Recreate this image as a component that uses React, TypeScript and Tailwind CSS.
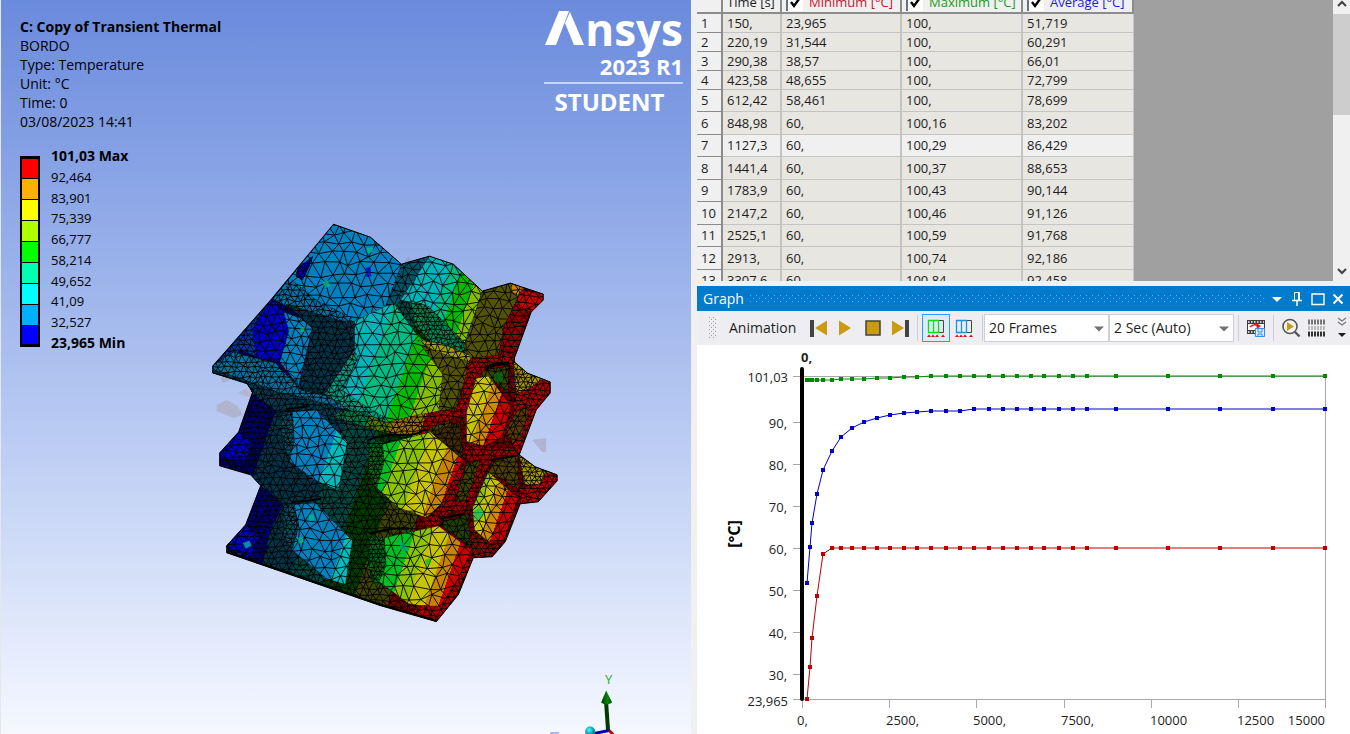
import React, { useState } from 'react';

type Point = [number, number];

interface Face {
  id: string;
  points: string;
  fill: string;
  mesh?: number;
}

interface Band {
  color: string;
  until: number;
}

interface ResultRow {
  time: string;
  min: string;
  max: string;
  avg: string;
}

const LEGEND_COLORS = [
  'bg-[#ff0000]',
  'bg-[#ffb000]',
  'bg-[#ffff00]',
  'bg-[#b0ff00]',
  'bg-[#00ff00]',
  'bg-[#00ffb0]',
  'bg-[#00ffff]',
  'bg-[#00b0ff]',
  'bg-[#0000ff]',
];

const LEGEND_LABELS = [
  '101,03 Max',
  '92,464',
  '83,901',
  '75,339',
  '66,777',
  '58,214',
  '49,652',
  '41,09',
  '32,527',
  '23,965 Min',
];

const ROWS: ResultRow[] = [
  { time: '150,', min: '23,965', max: '100,', avg: '51,719' },
  { time: '220,19', min: '31,544', max: '100,', avg: '60,291' },
  { time: '290,38', min: '38,57', max: '100,', avg: '66,01' },
  { time: '423,58', min: '48,655', max: '100,', avg: '72,799' },
  { time: '612,42', min: '58,461', max: '100,', avg: '78,699' },
  { time: '848,98', min: '60,', max: '100,16', avg: '83,202' },
  { time: '1127,3', min: '60,', max: '100,29', avg: '86,429' },
  { time: '1441,4', min: '60,', max: '100,37', avg: '88,653' },
  { time: '1783,9', min: '60,', max: '100,43', avg: '90,144' },
  { time: '2147,2', min: '60,', max: '100,46', avg: '91,126' },
  { time: '2525,1', min: '60,', max: '100,59', avg: '91,768' },
  { time: '2913,', min: '60,', max: '100,74', avg: '92,186' },
  { time: '3307,6', min: '60,', max: '100,84', avg: '92,458' },
];

// Later time steps, below the visible part of the table
const LATE_TIMES = [
  3700, 4130, 4530, 4930, 5350, 5764, 6166, 6567, 6940, 7370, 7772, 8173, 9005, 10500, 12000, 13500, 15000,
];

const OUTLINE =
  '333,224 370,237 401,264 429,256 453,264 482,291 510,283 543,294 543,300 531,312 513,361 527,373 550,382 550,393 536,410 519,455 535,467 557,475 557,481 538,502 520,504 505,542 492,557 473,558 458,595 436,622 380,606 226,553 226,546 245,525 260,486 250,475 219,466 219,453 238,432 252,392 246,383 212,373 212,366 270,300';

// Temperature bands; "until" is measured along the slanted gradient axis
const BANDS: Record<string, Band[]> = {
  dark: [
    { color: '#00005c', until: 272 },
    { color: '#003448', until: 345 },
    { color: '#004842', until: 382 },
    { color: '#003c00', until: 416 },
    { color: '#404400', until: 452 },
    { color: '#6e0000', until: 700 },
  ],
  top: [
    { color: '#00b4bc', until: 352 },
    { color: '#00bc84', until: 386 },
    { color: '#00bc00', until: 408 },
    { color: '#86bc00', until: 700 },
  ],
  bump: [
    { color: '#00b4bc', until: 396 },
    { color: '#00bc84', until: 409 },
    { color: '#00bc00', until: 426 },
    { color: '#86bc00', until: 700 },
  ],
  left: [
    { color: '#0082c0', until: 340 },
    { color: '#00bcbc', until: 700 },
  ],
  lowerLeft: [
    { color: '#0082c0', until: 386 },
    { color: '#00bcbc', until: 700 },
  ],
  center: [
    { color: '#00c020', until: 408 },
    { color: '#8cc400', until: 434 },
    { color: '#c8c400', until: 456 },
    { color: '#c88400', until: 470 },
    { color: '#cc0000', until: 700 },
  ],
  lowerCenter: [
    { color: '#00c020', until: 454 },
    { color: '#8cc400', until: 470 },
    { color: '#c8c400', until: 489 },
    { color: '#c88400', until: 503 },
    { color: '#cc0000', until: 700 },
  ],
  right: [
    { color: '#c8c400', until: 479 },
    { color: '#d08a00', until: 492 },
    { color: '#cc0000', until: 700 },
  ],
  lowerRight: [
    { color: '#8cc400', until: 510 },
    { color: '#c8c400', until: 521 },
    { color: '#d08a00', until: 532 },
    { color: '#cc0000', until: 700 },
  ],
  ledge: [
    { color: '#00784c', until: 368 },
    { color: '#507c00', until: 392 },
    { color: '#a07000', until: 424 },
    { color: '#a80000', until: 700 },
  ],
};

const FACES: Face[] = [
  { id: 'body', points: OUTLINE, fill: 'url(#band-dark)', mesh: 7 },
  { id: 'leg-upper', points: '252,392 272,406 266,432 256,452 246,462 238,432', fill: '#000070', mesh: 6 },
  { id: 'leg-lower', points: '260,486 283,504 270,530 262,564 240,557 245,525', fill: '#000078', mesh: 6 },
  { id: 'roof', points: '333,224 370,237 401,264 394,306 355,322 322,312 285,304 272,299', fill: '#0082c0', mesh: 12 },
  { id: 'roof-edge', points: '272,299 292,280 316,300 352,318 345,326 285,306', fill: '#0074a8', mesh: 6 },
  { id: 'roof-cold', points: '297,268 313,255 309,266 302,280 295,276', fill: '#0000b0', mesh: 5 },
  { id: 'cold', points: '271,299 283,312 300,317 288,331 279,361 262,360 243,352 241,334', fill: '#0000c0', mesh: 10 },
  { id: 'cold-edge', points: '213,366 271,299 252,329 256,357 240,350 225,362', fill: '#0038a0', mesh: 6 },
  { id: 'notch', points: '283,312 300,318 312,328 298,386 279,362 288,331', fill: '#0082c0', mesh: 10 },
  { id: 'notch-shade', points: '285,304 345,322 354,350 324,393 298,389 312,328', fill: '#003448', mesh: 7 },
  { id: 'ridge', points: '212,366 232,352 275,363 300,390 326,396 350,410 320,406 270,392 212,373', fill: '#0074a0', mesh: 6 },
  { id: 'ridge-shade', points: '212,369 248,381 275,391 320,402 352,412 340,424 300,410 276,412 252,394 246,383 212,373', fill: '#003c50', mesh: 6 },
  { id: 'valley', points: '401,264 429,256 415,285 394,307 385,306', fill: '#005468', mesh: 8 },
  { id: 'plate', points: '354,321 385,306 394,304 416,334 432,346 452,372 440,412 386,424 350,410 324,394 354,350', fill: 'url(#band-top)', mesh: 12 },
  { id: 'plate-edge', points: '354,350 358,358 342,390 362,404 386,418 382,427 350,411 324,394', fill: '#009c84', mesh: 6 },
  { id: 'bump', points: '429,256 453,264 482,291 466,344 440,340 420,322 410,302 400,300', fill: 'url(#band-bump)', mesh: 11 },
  { id: 'bump-edge', points: '410,300 428,306 466,344 462,354 430,342 414,325', fill: '#008c58', mesh: 5 },
  { id: 'fin', points: '482,291 510,283 521,290 505,328 498,356 470,358 463,346', fill: '#545400', mesh: 10 },
  { id: 'fin-tip', points: '510,283 525,288 517,295 512,292', fill: '#c88400', mesh: 8 },
  { id: 'fin-hot', points: '521,290 543,294 543,300 531,312 522,318 514,306', fill: '#cc0000', mesh: 8 },
  { id: 'fin-shade', points: '514,304 531,312 513,362 498,357 503,328', fill: '#900000', mesh: 7 },
  { id: 'olive', points: '420,345 466,356 468,372 455,408 438,412 442,374', fill: '#545400', mesh: 9 },
  { id: 'olive-edge', points: '416,340 440,343 474,357 470,362 436,352', fill: '#a8a000', mesh: 7 },
  { id: 'ledge', points: '350,408 386,422 420,414 458,408 468,396 466,414 430,428 422,438 380,432 330,416', fill: 'url(#band-ledge)', mesh: 6 },
  { id: 'frame-top', points: '470,358 513,353 516,366 484,372 466,412 456,410', fill: '#a80000', mesh: 6 },
  { id: 'hollow', points: '484,370 508,366 508,392 496,384 480,376', fill: '#384400', mesh: 7 },
  { id: 'tip-mid', points: '513,361 527,373 548,381 528,394 516,396', fill: '#a89400', mesh: 5 },
  { id: 'tip-mid-hot', points: '530,388 540,380 550,382 550,393 536,410 519,455 512,442 514,394', fill: '#b00000', mesh: 6 },
  { id: 'tip-mid-dark', points: '516,412 530,404 522,436 512,444 506,430', fill: '#583c00', mesh: 7 },
  { id: 'hex-left', points: '288,412 316,410 347,442 338,491 314,480 288,461', fill: 'url(#band-left)', mesh: 11 },
  { id: 'hex-left-edge', points: '280,414 292,412 294,440 289,462 281,440', fill: '#005468', mesh: 5 },
  { id: 'hex-center', points: '376,446 430,432 463,460 441,504 426,518 398,508 372,484', fill: 'url(#band-center)', mesh: 12 },
  { id: 'hex-center-edge', points: '368,444 382,440 384,462 376,490 368,474', fill: '#006c18', mesh: 5 },
  { id: 'hex-center-shade', points: '430,432 460,422 463,460', fill: '#402c00', mesh: 7 },
  { id: 'rim-center', points: '463,460 470,508 448,514 432,532 420,526 440,506', fill: '#a00000', mesh: 6 },
  { id: 'hex-lower-left', points: '290,505 315,503 352,541 345,585 326,579 291,550', fill: 'url(#band-lowerLeft)', mesh: 11 },
  { id: 'hex-lower-left-edge', points: '282,506 294,504 298,528 292,550 283,540', fill: '#005468', mesh: 5 },
  { id: 'hex-lower-center', points: '374,540 438,526 471,550 456,592 436,609 408,604 376,580', fill: 'url(#band-lowerCenter)', mesh: 12 },
  { id: 'hex-lower-center-edge', points: '368,538 384,537 386,566 376,588 369,572', fill: '#006c18', mesh: 5 },
  { id: 'rim-lower', points: '420,606 440,606 458,578 471,550 473,558 458,595 436,622 408,612', fill: '#a80000', mesh: 7 },
  { id: 'hollow-lower', points: '438,524 468,514 470,546', fill: '#204000', mesh: 7 },
  { id: 'hex-right', points: '466,412 476,378 488,376 511,406 502,438 484,446 466,442', fill: 'url(#band-right)', mesh: 11 },
  { id: 'frame-mid', points: '463,446 512,448 519,455 492,461 470,506 462,496 466,462', fill: '#a00000', mesh: 6 },
  { id: 'passage', points: '466,464 480,461 466,500 455,502', fill: '#3c4400', mesh: 7 },
  { id: 'passage-right', points: '492,461 518,456 518,490 504,480 488,474', fill: '#504000', mesh: 7 },
  { id: 'hex-lower-right', points: '472,508 488,472 518,498 504,540 490,544 474,530', fill: 'url(#band-lowerRight)', mesh: 10 },
  { id: 'rim-right', points: '470,534 492,546 505,538 492,557 473,558', fill: '#980000', mesh: 6 },
  { id: 'tip-low', points: '519,455 535,467 552,473 538,488 524,484', fill: '#a89c00', mesh: 5 },
  { id: 'tip-low-hot', points: '540,484 546,473 557,475 557,481 538,502 520,504 519,488', fill: '#b40000', mesh: 6 },
  { id: 'foot-upper', points: '219,453 238,432 250,442 246,460 222,460', fill: '#0000c0', mesh: 8 },
  { id: 'foot-lower', points: '226,546 245,525 258,536 250,556 228,551', fill: '#0000c0', mesh: 8 },
];

// Small off-colour elements scattered over the body
const SPOTS = [
  { points: '365,268 370,266 371,276 366,277', fill: '#0000c0' },
  { points: '322,282 327,280 330,286 325,288', fill: '#00bc84' },
  { points: '366,248 373,247 372,252 367,253', fill: '#00bc84' },
  { points: '242,543 249,541 251,546 245,549', fill: '#00b4bc' },
  { points: '308,515 313,515 314,520 309,521', fill: '#00bc84' },
  { points: '297,538 302,537 303,542 298,544', fill: '#00bc84' },
  { points: '398,540 404,544 408,552 401,550', fill: '#00a890' },
  { points: '473,512 480,508 484,514 476,522', fill: '#00c060' },
  { points: '425,560 431,558 430,564 425,566', fill: '#00c020' },
  { points: '493,374 502,372 503,382 495,381', fill: '#006c18' },
  { points: '300,328 304,326 304,332 300,332', fill: '#00bc60' },
];

const FRAGMENTS = [
  { points: '216,405 226,400 237,406 242,415 233,418 216,411', fill: '#b1b4cf' },
  { points: '237,393 246,388 252,397 244,396', fill: '#b3b6d0' },
  { points: '220,377 232,379 222,383', fill: '#a9afcf' },
  { points: '532,440 546,438 546,452 542,452', fill: '#b0b4d0' },
  { points: '404,262 408,256 412,262', fill: '#95a2d4' },
  { points: '534,308 543,302 538,311', fill: '#aab1d6' },
  { points: '249,506 254,497 252,510', fill: '#c9cce0' },
];

const parsePoints = (points: string): Point[] =>
  points.split(' ').map((pair) => pair.split(',').map(Number) as Point);

const noise = (a: number, b: number) => {
  const value = Math.sin(a * 127.1 + b * 311.7) * 43758.5453;
  return value - Math.floor(value) - 0.5;
};

// Irregular triangle grid that covers the bounding box of a face
const meshPath = (points: string, size: number) => {
  const vertices = parsePoints(points);
  const xs = vertices.map((v) => v[0]);
  const ys = vertices.map((v) => v[1]);
  const left = Math.min(...xs) - size;
  const top = Math.min(...ys) - size;
  const cols = Math.ceil((Math.max(...xs) - left) / size) + 2;
  const rows = Math.ceil((Math.max(...ys) - top) / (size * 0.87)) + 2;
  const at = (c: number, r: number) => {
    const x = left + (c + (r % 2) / 2) * size + noise(c + left, r) * size * 0.5;
    const y = top + r * size * 0.87 + noise(r + top, c) * size * 0.5;
    return `${x.toFixed(1)} ${y.toFixed(1)}`;
  };
  let d = '';
  for (let r = 0; r < rows; r++) {
    for (let c = 0; c < cols; c++) {
      const odd = r % 2;
      d += `M${at(c, r)}L${at(c + 1, r)}`;
      d += `M${at(c, r)}L${at(c + odd, r + 1)}`;
      d += `M${at(c, r)}L${at(c + odd - 1, r + 1)}`;
    }
  }
  return d;
};

const BandGradient: React.FC<{ name: string; bands: Band[] }> = ({ name, bands }) => {
  const offset = (u: number) => Math.min(1, (u - 200) / 449);
  return (
    <linearGradient id={`band-${name}`} gradientUnits="userSpaceOnUse" x1="200" y1="420" x2="600" y2="560">
      {bands.map((band, i) => (
        <React.Fragment key={band.color}>
          <stop offset={i === 0 ? 0 : offset(bands[i - 1].until)} stopColor={band.color} />
          <stop offset={offset(band.until)} stopColor={band.color} />
        </React.Fragment>
      ))}
    </linearGradient>
  );
};

const ThermalModel: React.FC = () => (
  <svg viewBox="0 0 691 734" className="absolute inset-0 h-full w-full" aria-label="Temperature result">
    <defs>
      {Object.entries(BANDS).map(([name, bands]) => (
        <BandGradient key={name} name={name} bands={bands} />
      ))}
      {FACES.map((face) => (
        <clipPath key={face.id} id={`clip-${face.id}`}>
          <polygon points={face.points} />
        </clipPath>
      ))}
      <linearGradient id="axis-green">
        <stop offset="0" stopColor="#003c00" />
        <stop offset="0.6" stopColor="#008a00" />
        <stop offset="1" stopColor="#004600" />
      </linearGradient>
      <radialGradient id="axis-ball" cx="0.4" cy="0.35">
        <stop offset="0" stopColor="#4ff" />
        <stop offset="1" stopColor="#008c98" />
      </radialGradient>
    </defs>

    {FRAGMENTS.map((piece) => (
      <polygon key={piece.points} points={piece.points} fill={piece.fill} />
    ))}

    {FACES.map((face) => (
      <g key={face.id} clipPath={`url(#clip-${face.id})`}>
        <polygon points={face.points} fill={face.fill} />
        <path d={meshPath(face.points, face.mesh ?? 10)} stroke="#000" strokeOpacity="0.9" fill="none" />
        <polygon points={face.points} fill="none" stroke="#000" strokeOpacity="0.5" />
      </g>
    ))}
    {SPOTS.map((spot) => (
      <polygon key={spot.points} points={spot.points} fill={spot.fill} fillOpacity="0.75" />
    ))}

    {/* Deep creases between the cells */}
    <g fill="none" stroke="#000" strokeLinecap="round" strokeWidth="2">
      <path d="M286 409 Q298 408 308 406" />
      <path d="M292 502 Q306 502 320 499" />
      <path d="M368 440 Q384 434 400 435 T424 430" />
      <path d="M370 534 Q388 528 408 529 M440 519 L464 514" />
      <path d="M486 368 Q498 362 508 364" strokeWidth="4" />
      <path d="M490 460 L516 456" />
    </g>
    <polygon points={OUTLINE} fill="none" stroke="#000" strokeWidth="1" />
    <path d="M226 552 L380 605 L436 621" stroke="#000" strokeWidth="2" fill="none" />

    {/* Axis triad */}
    <text x="605" y="684" fontSize="13" fill="#1fae2c" className="font-['Open_Sans',sans-serif]">Y</text>
    <path d="M606 703 L608 732" stroke="#003c00" strokeWidth="4" />
    <path d="M606 691 L601 703 Q606 707 612 703 Z" fill="url(#axis-green)" />
    <path d="M594 734 L609 731" stroke="#0000b4" strokeWidth="3" />
    <path d="M609 731 L613 735" stroke="#d00000" strokeWidth="3" />
    <circle cx="590" cy="732" r="5" fill="url(#axis-ball)" />
    <path d="M550 733.5 H559" stroke="#6c6ce8" />
  </svg>
);

const Viewport: React.FC = () => (
  <section className="relative min-w-0 overflow-hidden border-l border-gray-200 bg-linear-to-b from-[#6a8adc] to-[#f5f8ff]">
    <ThermalModel />
    <div className="relative flex items-start justify-between pl-[19px] pr-2">
      <div className="pt-[17px]">
        <h1 className="text-sm leading-[19px] font-bold">C: Copy of Transient Thermal</h1>
        <div className="text-sm leading-[19px]">
          <p>BORDO</p>
          <p>Type: Temperature</p>
          <p>Unit: °C</p>
          <p>Time: 0</p>
          <p>03/08/2023 14:41</p>
        </div>
        <div className="mt-[15px] flex gap-[11px]">
          <div className="mt-[10px] flex w-5 flex-col self-start border-x-2 border-y border-black">
            {LEGEND_COLORS.map((color) => (
              <div key={color} className={`h-[21px] border-black first:border-t-2 last:border-b-2 not-first:border-t ${color}`} />
            ))}
          </div>
          <ul className="flex h-[207px] flex-col justify-between text-[13px] leading-5">
            {LEGEND_LABELS.map((label, i) => (
              <li key={label} className={i === 0 || i === LEGEND_LABELS.length - 1 ? 'text-sm leading-5 font-bold' : ''}>
                {label}
              </li>
            ))}
          </ul>
        </div>
      </div>
      <div className="flex flex-col items-end pt-2 text-white">
        <div className="flex items-start">
          <svg viewBox="0 0 40 35" className="mt-[3px] h-[35px] w-10">
            <path d="M0 34 L14 0 H24 L11 34 Z" fill="#fff" />
            <path d="M20 12 L25 1 L39 34 H29 Z" fill="#fff" />
          </svg>
          <span className="text-[44px] leading-[42px] font-bold">nsys</span>
        </div>
        <span className="mt-1 text-[22px] leading-6 font-bold">2023 R1</span>
        <div className="mt-[4px] h-[2px] w-[139px] bg-[#c6d3f4]" />
        <span className="mt-1 w-[139px] pr-2 text-center text-2xl leading-7 font-bold">STUDENT</span>
      </div>
    </div>
  </section>
);

interface HeaderCheckProps {
  label: string;
  color: string;
}

const HeaderCheck: React.FC<HeaderCheckProps> = ({ label, color }) => (
  <label className={`flex items-center gap-1.5 whitespace-nowrap ${color}`}>
    <span className="relative block h-[17px] w-[17px]">
      <input
        type="checkbox"
        defaultChecked
        className="peer block h-[17px] w-[17px] appearance-none border-t-2 border-l-2 border-gray-500 bg-white"
      />
      <svg viewBox="0 0 17 17" className="pointer-events-none absolute inset-0 hidden peer-checked:block">
        <path d="M5 8 L8 12 L13 5" stroke="#000" strokeWidth="2.4" fill="none" />
      </svg>
    </span>
    {label}
  </label>
);

const rowHeight = (index: number) => {
  if (index < 4) return 'h-[19px]';
  return index % 2 === 0 ? 'h-[22px]' : 'h-[23px]';
};

const TabularData: React.FC = () => (
  <section className="flex h-[281px] overflow-hidden bg-[#a0a0a0]">
    <div className="min-w-0 flex-1">
      <table className="-mt-[8px] w-[437px] table-fixed border-separate border-spacing-0 text-left text-[13px] leading-[17px] text-[#1c1c1c]">
        <colgroup>
          <col className="w-[26px]" />
          <col className="w-[59px]" />
          <col className="w-[120px]" />
          <col className="w-[121px]" />
          <col className="w-[111px]" />
        </colgroup>
        <thead>
          <tr className="h-[22px] bg-[#f0f0f0]">
            <th className="border-r-2 border-b-2 border-[#8c8c8c] p-0" aria-label="Step" />
            <th className="border-r-2 border-b-2 border-[#8c8c8c] p-0 pl-1 font-medium whitespace-nowrap">Time [s]</th>
            <th className="border-r-2 border-b-2 border-[#8c8c8c] p-0 pl-1 font-medium">
              <HeaderCheck label="Minimum [°C]" color="text-[#c8102e]" />
            </th>
            <th className="border-r-2 border-b-2 border-[#8c8c8c] p-0 pl-1 font-medium">
              <HeaderCheck label="Maximum [°C]" color="text-[#1a9a1a]" />
            </th>
            <th className="border-r-2 border-b-2 border-[#8c8c8c] p-0 pl-1 font-medium">
              <HeaderCheck label="Average [°C]" color="text-[#1c1cd8]" />
            </th>
          </tr>
        </thead>
        <tbody>
          {ROWS.map((row, i) => (
            <tr key={row.time} className={`${rowHeight(i)} ${i === 6 ? 'bg-[#f0f0f0]' : 'bg-[#e8e6e1]'}`}>
              <th className="border-r-2 border-b border-[#8c8c8c] bg-[#f0f0f0] p-0 pl-1 font-normal">{i + 1}</th>
              <td className="border-r-2 border-b border-[#c4c4c4] p-0 pl-1">{row.time}</td>
              <td className="border-r-2 border-b border-[#c4c4c4] p-0 pl-1">{row.min}</td>
              <td className="border-r-2 border-b border-[#c4c4c4] p-0 pl-1">{row.max}</td>
              <td className="border-r border-b border-[#c4c4c4] p-0 pl-1">{row.avg}</td>
            </tr>
          ))}
        </tbody>
      </table>
    </div>
    <div className="flex w-[17px] flex-col items-center justify-between bg-[#f0f0f0]">
      <svg viewBox="0 0 17 14" className="h-[14px] w-[17px]">
        <path d="M5 6 L9 2 L13 6" stroke="#404040" strokeWidth="2" fill="none" />
      </svg>
      <div className="h-[101px] w-full bg-[#cdcdcd]" />
      <div className="flex-1" />
      <svg viewBox="0 0 17 17" className="h-[17px] w-[17px]">
        <path d="M5 5 L9 9 L13 5" stroke="#404040" strokeWidth="2" fill="none" />
      </svg>
    </div>
  </section>
);

const TitleBar: React.FC = () => (
  <header className="flex h-[25px] items-center gap-1.5 bg-[#007acc] pl-1.5 pr-1.5 text-white">
    <h2 className="text-sm leading-5">Graph</h2>
    <svg className="h-[9px] min-w-0 flex-1" aria-hidden="true">
      <defs>
        <pattern id="title-grip" width="6" height="6" patternUnits="userSpaceOnUse">
          <rect x="0" y="1" width="1" height="1" fill="#62b0e4" />
          <rect x="3" y="4" width="1" height="1" fill="#62b0e4" />
        </pattern>
      </defs>
      <rect width="100%" height="9" fill="url(#title-grip)" />
    </svg>
    <div className="flex items-center gap-[7px]">
      <button aria-label="Window position">
        <svg viewBox="0 0 12 14" className="h-[14px] w-3">
          <path d="M1 5 H11 L6 10 Z" fill="#fff" />
        </svg>
      </button>
      <button aria-label="Auto hide">
        <svg viewBox="0 0 14 14" className="h-[14px] w-[14px]" fill="none" stroke="#fff">
          <path d="M4.5 8 V0.5 H9.5 V8 M8.5 1 V8" />
          <path d="M2 8.5 H12" strokeWidth="1.5" />
          <path d="M7 9 V14" strokeWidth="1.5" />
        </svg>
      </button>
      <button aria-label="Maximize">
        <svg viewBox="0 0 14 14" className="h-[14px] w-[14px]">
          <path d="M1 2 H13 V12.5 H1 Z" stroke="#fff" strokeWidth="1.4" fill="none" />
        </svg>
      </button>
      <button aria-label="Close">
        <svg viewBox="0 0 12 14" className="h-[14px] w-3">
          <path d="M1.5 2.5 L10.5 11.5 M10.5 2.5 L1.5 11.5" stroke="#fff" strokeWidth="2" />
        </svg>
      </button>
    </div>
  </header>
);

interface ToolSelectProps {
  label: string;
  options: string[];
}

const ToolSelect: React.FC<ToolSelectProps> = ({ label, options }) => (
  <div className="relative w-[125px] border border-[#cccedb] bg-white">
    <select aria-label={label} className="block h-[26px] w-full appearance-none pl-1 text-sm leading-5 text-[#1e1e1e]">
      {options.map((option) => (
        <option key={option}>{option}</option>
      ))}
    </select>
    <svg viewBox="0 0 10 6" className="pointer-events-none absolute top-[11px] right-1 h-1.5 w-2.5">
      <path d="M0 0.5 H10 L5 5.5 Z" fill="#717171" />
    </svg>
  </div>
);

const ColumnsIcon: React.FC<{ color: string }> = ({ color }) => (
  <svg viewBox="0 0 20 20" className="h-5 w-5" fill="none">
    <path d="M11 2.5 H17.5 V14.5 H11" stroke="#444" />
    <path d="M2.5 2 V15 M7.5 2 V15 M12.5 2 V15 M2 2.5 H13 M2 14.5 H13" stroke={color} strokeWidth="1.3" />
    <path d="M1 19 L3 16.5 L5 19 Z M5 19 L7 16.5 L9 19 Z M9 19 L11 16.5 L13 19 Z M15 19 L17 16.5 L19 19 Z" fill="#e01010" />
  </svg>
);

const Divider: React.FC = () => <div className="h-[26px] w-px bg-[#cccedb]" />;

const Toolbar: React.FC = () => {
  const [mode, setMode] = useState<'distributed' | 'results'>('distributed');

  return (
    <div className="flex h-[34px] items-center overflow-hidden bg-[#eeeef2] pl-3 text-[#1e1e1e]">
      <svg viewBox="0 0 8 22" className="h-[22px] w-2" aria-hidden="true">
        <defs>
          <pattern id="tool-grip" width="4" height="4" patternUnits="userSpaceOnUse">
            <rect width="1" height="1" fill="#999" />
            <rect x="2" y="2" width="1" height="1" fill="#999" />
          </pattern>
        </defs>
        <rect width="7" height="22" fill="url(#tool-grip)" />
      </svg>
      <span className="ml-3 w-[76px] text-sm leading-5">Animation</span>
      <div className="ml-[5px] flex items-center gap-[9px]">
        <button aria-label="Previous frame">
          <svg viewBox="0 0 18 18" className="h-[18px] w-[18px]">
            <rect x="0" y="1" width="4" height="17" fill="#424242" />
            <path d="M17 1.5 V16.5 L5 9 Z" fill="#c99b10" />
          </svg>
        </button>
        <button aria-label="Play">
          <svg viewBox="0 0 18 18" className="h-[18px] w-[18px]">
            <path d="M2 1.5 V16.5 L14 9 Z" fill="#c99b10" />
          </svg>
        </button>
        <button aria-label="Stop">
          <svg viewBox="0 0 18 18" className="h-[18px] w-[18px]">
            <rect x="2" y="2" width="14" height="14" fill="#c99b10" stroke="#424242" strokeWidth="1.5" />
          </svg>
        </button>
        <button aria-label="Next frame">
          <svg viewBox="0 0 18 18" className="h-[18px] w-[18px]">
            <path d="M1 1.5 V16.5 L13 9 Z" fill="#c99b10" />
            <rect x="14" y="1" width="4" height="17" fill="#424242" />
          </svg>
        </button>
      </div>
      <div className="ml-2 flex items-center gap-1">
        <Divider />
        <button
          aria-label="Distributed"
          onClick={() => setMode('distributed')}
          className={`flex h-7 w-7 items-center justify-center border ${
            mode === 'distributed' ? 'border-[#3399ff] bg-[#dcebf9]' : 'border-transparent'
          }`}
        >
          <ColumnsIcon color="#10e010" />
        </button>
        <button
          aria-label="Result sets"
          onClick={() => setMode('results')}
          className={`-ml-1 flex h-7 w-7 items-center justify-center border ${
            mode === 'results' ? 'border-[#3399ff] bg-[#dcebf9]' : 'border-transparent'
          }`}
        >
          <ColumnsIcon color="#1e90e8" />
        </button>
        <Divider />
      </div>
      <div className="ml-px flex">
        <ToolSelect label="Frames" options={['20 Frames', '50 Frames', '100 Frames']} />
        <ToolSelect label="Duration" options={['2 Sec (Auto)', '5 Sec', '10 Sec']} />
      </div>
      <div className="ml-1 flex items-center gap-[7px]">
        <Divider />
        <button aria-label="Export video">
          <svg viewBox="0 0 20 20" className="h-5 w-5" fill="none">
            <path d="M1 2 H19 V16 H1 Z" fill="#3c3c3c" />
            <path d="M2 6 H18 V12 H2 Z" fill="#fff" />
            <path d="M2 4 H18 M2 14 H18" stroke="#fff" strokeWidth="1.5" strokeDasharray="1.5 1.5" />
            <path d="M4 9 Q8 5 12 8" stroke="#e81010" strokeWidth="1.5" />
            <path d="M10 5 L15 8 L11 11 Z" fill="#e81010" />
            <path d="M9.5 10.5 H18.5 V18.5 H9.5 Z" fill="#d8ecff" stroke="#3a8ee8" />
            <path d="M12 11 V14 H16 V11 M12 18 V16 H16 V18" stroke="#3a8ee8" />
          </svg>
        </button>
        <Divider />
        <button aria-label="Zoom to fit">
          <svg viewBox="0 0 20 20" className="h-5 w-5">
            <circle cx="9" cy="8.5" r="7" fill="#f4f4f4" stroke="#555" strokeWidth="1.6" />
            <path d="M14 14 L18.5 18.5" stroke="#555" strokeWidth="2.4" />
            <path d="M6 4 V13 L13 8.5 Z" fill="#c99b10" />
          </svg>
        </button>
        <button aria-label="Grid">
          <svg viewBox="0 0 18 18" className="h-[18px] w-[18px]" strokeDasharray="2 1">
            <path d="M0 3 H18" stroke="#777" strokeWidth="5" />
            <path d="M0 9 H18" stroke="#bbb" strokeWidth="4" />
            <path d="M0 15 H18" stroke="#333" strokeWidth="5" />
          </svg>
        </button>
        <button aria-label="More commands">
          <svg viewBox="0 0 10 22" className="ml-1 h-[22px] w-2.5">
            <path d="M1 1 L5 4 L9 1 M1 5 L5 8 L9 5" stroke="#777" strokeWidth="1.2" fill="none" />
            <path d="M1 16 H9 L5 20 Z" fill="#1e1e1e" />
          </svg>
        </button>
      </div>
    </div>
  );
};

const PLOT = { left: 802, right: 1325, top: 376, bottom: 699 };
const Y_TICKS = [90, 80, 70, 60, 50, 40, 30];
const X_TICKS = [2500, 5000, 7500, 10000, 12500];
const X_LABELS = ['2500,', '5000,', '7500,', '10000', '12500'];

const toNumber = (text: string) => Number(text.replace(',', '.'));
const plotX = (time: number) => Math.round(PLOT.left + (time / 15000) * (PLOT.right - PLOT.left));
const plotY = (value: number) =>
  Math.round(PLOT.bottom - ((value - 23.965) / (101.03 - 23.965)) * (PLOT.bottom - PLOT.top));

const buildSeries = (key: 'min' | 'max' | 'avg', late: (time: number) => number): Point[] => [
  ...ROWS.map((row): Point => [plotX(toNumber(row.time)), plotY(toNumber(row[key]))]),
  ...LATE_TIMES.map((time): Point => [plotX(time), plotY(late(time))]),
];

const SERIES = [
  { color: '#008a00', points: buildSeries('max', () => 101.03) },
  { color: '#0000cc', points: buildSeries('avg', (time) => (time < 4900 ? 92.75 : 93.05)) },
  { color: '#c00000', points: buildSeries('min', () => 60) },
];

const Chart: React.FC = () => (
  <div className="min-h-0 flex-1 bg-white">
    <svg
      viewBox="697 345 653 389"
      className="h-full w-full font-['Open_Sans','Noto_Sans',sans-serif] text-[13px]"
      aria-label="Temperature over time"
    >
      <g stroke="#a8a8a8" fill="none" shapeRendering="crispEdges">
        <path d={`M793 ${PLOT.top} H${PLOT.right} V708`} />
        <path d={`M793 ${PLOT.bottom} H${PLOT.right}`} />
        <path d={`M${PLOT.left} ${PLOT.bottom} V708`} />
        {Y_TICKS.map((tick) => (
          <path key={tick} d={`M793 ${plotY(tick)} H802`} />
        ))}
        {X_TICKS.map((tick) => (
          <path key={tick} d={`M${plotX(tick)} ${PLOT.bottom} V708`} />
        ))}
      </g>
      {SERIES.map((series) => (
        <g key={series.color}>
          <polyline points={series.points.map((p) => p.join(',')).join(' ')} fill="none" stroke={series.color} />
          {series.points.map(([x, y]) => (
            <rect key={x} x={x - 2} y={y - 2} width="4" height="4" fill={series.color} />
          ))}
        </g>
      ))}
      <path d="M802 369 V699" stroke="#000" strokeWidth="4" strokeLinecap="round" />
      <g fill="#1e1e1e" textAnchor="end">
        <text x="788" y="382">101,03</text>
        {Y_TICKS.map((tick) => (
          <text key={tick} x="787" y={plotY(tick) + 6}>
            {`${tick},`}
          </text>
        ))}
        <text x="788" y="706">23,965</text>
      </g>
      <g fill="#1e1e1e">
        <text x="801" y="362" className="font-bold">0,</text>
        <text x="797" y="725">0,</text>
        {X_TICKS.map((tick, i) => (
          <text key={tick} x={plotX(tick) - (i < 3 ? 3 : 1)} y="725">
            {X_LABELS[i]}
          </text>
        ))}
        <text x="1325" y="725" textAnchor="end">15000</text>
      </g>
      <text transform="translate(740 534) rotate(-90)" textAnchor="middle" className="text-base font-bold">
        [°C]
      </text>
    </svg>
  </div>
);

const App: React.FC = () => {
  return (
    <main className="grid h-screen grid-cols-[691fr_659fr] overflow-hidden bg-[#f0f0f0] font-['Open_Sans','Noto_Sans',sans-serif] text-black">
      <Viewport />
      <div className="flex min-w-0 flex-col pl-1.5">
        <TabularData />
        <section className="mt-[5px] flex min-h-0 flex-1 flex-col">
          <TitleBar />
          <Toolbar />
          <Chart />
        </section>
      </div>
    </main>
  );
};

export default App;
